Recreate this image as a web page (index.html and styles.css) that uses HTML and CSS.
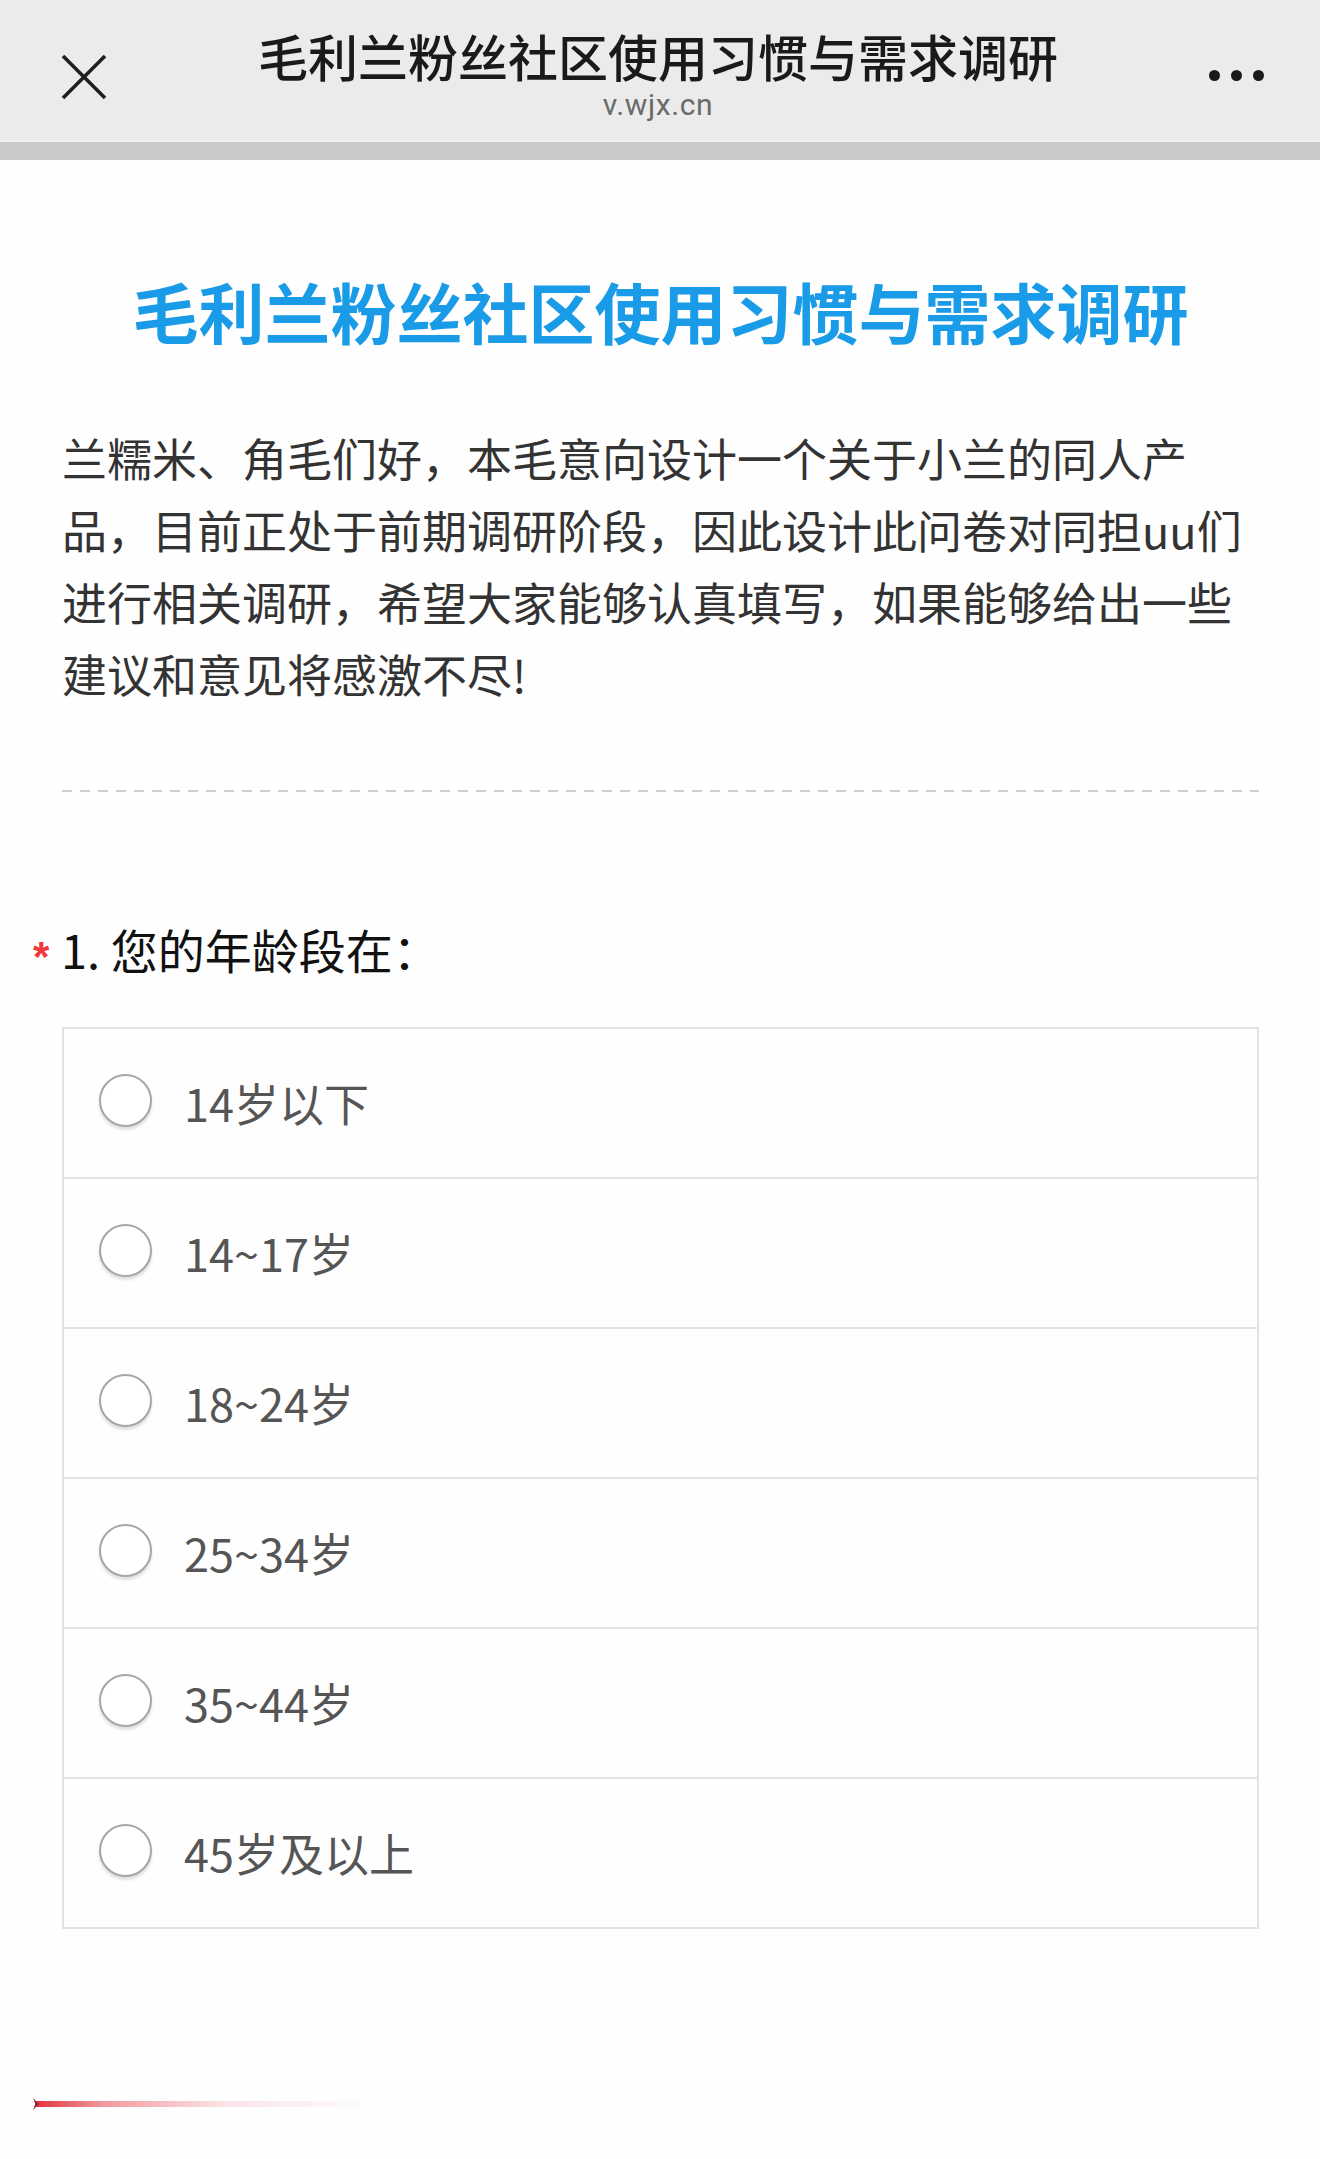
FILE: index.html
```html
<!DOCTYPE html>
<html lang="zh-CN">
<head>
<meta charset="utf-8">
<title>毛利兰粉丝社区使用习惯与需求调研</title>
<link rel="stylesheet" href="styles.css">
</head>
<body>
<header class="topbar">
  <div class="close">
    <svg width="46" height="46" viewBox="0 0 46 46"><path d="M2 2 L44 44 M44 2 L2 44" stroke="#1f1f1f" stroke-width="3.6" fill="none"/></svg>
  </div>
  <div class="top-titles">
    <div class="top-title">毛利兰粉丝社区使用习惯与需求调研</div>
    <div class="top-url">v.wjx.cn</div>
  </div>
  <div class="more"><span></span><span></span><span></span></div>
</header>
<div class="band"></div>
<main class="page">
  <h1 class="survey-title">毛利兰粉丝社区使用习惯与需求调研</h1>
  <p class="desc">兰糯米、角毛们好，本毛意向设计一个关于小兰的同人产品，目前正处于前期调研阶段，因此设计此问卷对同担uu们进行相关调研，希望大家能够认真填写，如果能够给出一些建议和意见将感激不尽!</p>
  <div class="divider"></div>
  <div class="question"><span class="req">*</span>1. 您的年龄段在：</div>
  <div class="options">
    <div class="option"><span class="radio"></span><span class="label">14岁以下</span></div>
    <div class="option"><span class="radio"></span><span class="label">14~17岁</span></div>
    <div class="option"><span class="radio"></span><span class="label">18~24岁</span></div>
    <div class="option"><span class="radio"></span><span class="label">25~34岁</span></div>
    <div class="option"><span class="radio"></span><span class="label">35~44岁</span></div>
    <div class="option"><span class="radio"></span><span class="label">45岁及以上</span></div>
  </div>
</main>
<div class="progress"><span class="tip"></span></div>
</body>
</html>
```
FILE: styles.css
```css
html, body {
  margin: 0;
  padding: 0;
  background: #fefefe;
}
body {
  font-family: "Noto Sans CJK SC", "Noto Sans", sans-serif;
  color: #333;
  width: 1320px;
  height: 2159px;
  overflow: hidden;
}
.topbar {
  height: 140px;
  background: #ebebeb;
  display: flex;
  align-items: center;
  border-bottom: 2px solid #efefef;
  box-sizing: content-box;
}
.close {
  width: 46px;
  height: 46px;
  margin-left: 61px;
  margin-top: 14px;
  flex: none;
}
.close svg { display: block; }
.top-titles {
  flex: 1;
  display: flex;
  flex-direction: column;
  align-items: center;
  margin: 12px 40px 0;
}
.top-title {
  font-size: 50px;
  font-weight: 500;
  color: #1a1a1a;
  line-height: 52px;
  margin-top: -2px;
}
.top-url {
  font-family: Roboto, "Liberation Sans", sans-serif;
  font-size: 30px;
  color: #6a6a6a;
  line-height: 32px;
  margin-top: 8px;
  letter-spacing: 0.6px;
}
.more {
  display: flex;
  gap: 11px;
  margin-right: 56px;
  margin-top: 10px;
  flex: none;
}
.more span {
  width: 11px;
  height: 11px;
  border-radius: 50%;
  background: #1a1a1a;
}
.band {
  height: 18px;
  background: #c9c9c9;
}
.page {
  padding: 0 61px 0 62px;
}
.survey-title {
  margin: 105px 0 0;
  text-align: center;
  font-size: 66px;
  line-height: 90px;
  font-weight: 700;
  color: #1a9be8;
}
.desc {
  margin: 67px 0 0;
  font-size: 45px;
  line-height: 72px;
  color: #333;
}
.divider {
  margin-top: 80px;
  height: 2px;
  background-image: linear-gradient(to right, #cfcfcf 0, #cfcfcf 10px, transparent 10px, transparent 18px);
  background-size: 18px 2px;
  background-repeat: repeat-x;
}
.question {
  margin-top: 127px;
  margin-left: -62px;
  padding-left: 33px;
  font-size: 47px;
  line-height: 60px;
  color: #111;
  display: flex;
  align-items: center;
}
.req {
  color: #f03a3a;
  font-family: "Liberation Sans", sans-serif;
  font-size: 42px;
  font-weight: 700;
  width: 28px;
  line-height: 30px;
  margin-top: 16px;
}
.options {
  margin-top: 48px;
  border: 2px solid #e2e2e2;
}
.option {
  height: 148px;
  display: flex;
  align-items: center;
  padding-left: 35px;
  background: #fefefe;
}
.option + .option {
  border-top: 2px solid #e2e2e2;
}
.radio {
  width: 49px;
  height: 49px;
  border: 2.5px solid #a6a6a6;
  border-radius: 50%;
  background: #fff;
  box-shadow: 0 3px 3px rgba(0,0,0,0.12);
  flex: none;
  margin-top: -6px;
}
.label {
  margin-left: 32px;
  font-size: 45px;
  color: #555;
  line-height: 60px;
}
.progress {
  margin-top: 172px;
  margin-left: 35px;
  width: 345px;
  height: 6px;
  background: linear-gradient(to right, rgba(222,40,50,0.95) 0%, rgba(230,70,80,0.55) 20%, rgba(240,150,160,0.25) 55%, rgba(255,255,255,0) 100%);
  position: relative;
}
.tip {
  position: absolute;
  left: -2px;
  top: -3px;
  width: 6px;
  height: 12px;
  background: #9a2a30;
  clip-path: polygon(0 0, 100% 50%, 0 100%, 40% 50%);
}
```
